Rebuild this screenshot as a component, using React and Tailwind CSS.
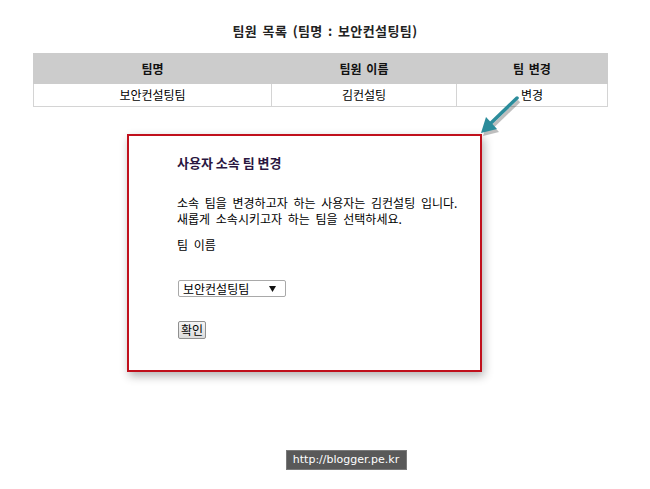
import React from 'react';

const FONT = { fontFamily: '"Noto Sans CJK KR", "Noto Sans", sans-serif' };

function Arrow() {
  // teal pointer from the "변경" cell down to the dialog corner
  return (
    <svg className="absolute left-0 top-0 pointer-events-none" width="650" height="489">
      <g opacity="0.25" transform="translate(2,3)">
        <line x1="517" y1="98" x2="491" y2="123" stroke="#000" strokeWidth="3.5" />
        <polygon points="481,133 497,129 486,117" fill="#000" />
      </g>
      <line x1="517" y1="98" x2="491" y2="123" stroke="#2c8c9b" strokeWidth="3.5" strokeLinecap="round" />
      <polygon points="481,133 497,129 486,117" fill="#2c8c9b" />
    </svg>
  );
}

export default function App() {
  return (
    <div className="relative w-[650px] h-[489px] bg-white overflow-hidden text-black" style={FONT}>
      {/* Title */}
      <div className="pt-[23px] h-[53px] text-center text-[13px] leading-[16px] font-bold tracking-[0.4px] [word-spacing:2px] text-[#222]">
        팀원 목록 (팀명 : 보안컨설팅팀)
      </div>

      {/* Team table */}
      <table className="ml-[33px] w-[574px] border-collapse text-[12px] table-fixed">
        <colgroup>
          <col className="w-[238px]" />
          <col className="w-[185px]" />
          <col className="w-[151px]" />
        </colgroup>
        <thead>
          <tr className="h-[30px] bg-[#cccccc]">
            <th className="font-bold border border-[#cccccc] text-[#111]">팀명</th>
            <th className="font-bold border border-[#cccccc] text-[#111] [word-spacing:2px]">팀원 이름</th>
            <th className="font-bold border border-[#cccccc] text-[#111] [word-spacing:2px]">팀 변경</th>
          </tr>
        </thead>
        <tbody>
          <tr className="h-[23px]">
            <td className="text-center border border-[#d4d4d4]">보안컨설팅팀</td>
            <td className="text-center border border-[#d4d4d4]">김컨설팅</td>
            <td className="text-center border border-[#d4d4d4]">변경</td>
          </tr>
        </tbody>
      </table>

      {/* Change team dialog */}
      <div className="mt-[27px] ml-[127px] w-[355px] h-[238px] border-2 border-[#c0101c] bg-white shadow-[2px_4px_9px_rgba(0,0,0,0.3)] pl-[48px] pt-[19px] text-[12px]">
        <div className="font-bold text-[13px] leading-[16px] text-[#2a1640]">사용자 소속 팀 변경</div>
        <div className="mt-[24px] leading-[16px] [word-spacing:3px]">
          <div>소속 팀을 변경하고자 하는 사용자는 김컨설팅 입니다.</div>
          <div>새롭게 소속시키고자 하는 팀을 선택하세요.</div>
        </div>
        <div className="mt-[10px] leading-[16px] [word-spacing:3px]">팀 이름</div>
        <div className="mt-[27px] ml-[1px] w-[108px] h-[17px] border border-[#a9a9a9] rounded-[2px] bg-white flex items-center justify-between pl-[4px] pr-[9px] leading-none">
          <span>보안컨설팅팀</span>
          <svg width="7" height="6" viewBox="0 0 7 6">
            <polygon points="0,0 7,0 3.5,6" fill="#111" />
          </svg>
        </div>
        <div className="mt-[24px] ml-[1px] w-[28px] h-[18px] border border-[#8f8f8f] rounded-[2px] bg-gradient-to-b from-[#f4f4f4] to-[#dcdcdc] flex items-center justify-center leading-none">
          확인
        </div>
      </div>

      {/* Blog URL stamp */}
      <div className="mt-[78px] flex justify-center pl-[42px]">
        <div className="w-[121px] h-[20px] bg-[#595959] border border-[#7a7a7a] flex items-center justify-center text-white text-[11px]" style={{ fontFamily: '"DejaVu Sans", sans-serif' }}>
          http://blogger.pe.kr
        </div>
      </div>

      <Arrow />
    </div>
  );
}
